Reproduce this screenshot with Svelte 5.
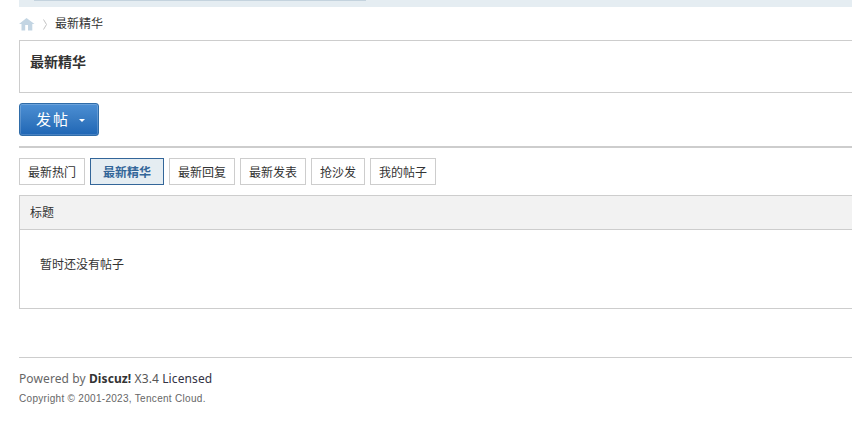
<script>
	const tabs = [
		{ label: '最新热门' },
		{ label: '最新精华', active: true },
		{ label: '最新回复' },
		{ label: '最新发表' },
		{ label: '抢沙发' },
		{ label: '我的帖子' }
	];
</script>

<div class="page">
	<div class="topbar"><div class="topbar-line"></div></div>

	<nav class="crumbs">
		<svg class="home" width="16" height="13" viewBox="0 0 16 13" aria-hidden="true">
			<path d="M7.5 0 L15.5 6 L13.3 6 L13.3 12.5 L9 12.5 L9 7 L6.2 7 L6.2 12.5 L2.5 12.5 L2.5 6 L0 6 Z" fill="#c3d5e3" />
		</svg>
		<svg class="sep" width="4" height="11" viewBox="0 0 4 11" aria-hidden="true">
			<path d="M0.5 0.5 L3.5 5.5 L0.5 10.5" fill="none" stroke="#c4c4c4" />
		</svg>
		<span>最新精华</span>
	</nav>

	<div class="title-box">
		<h1>最新精华</h1>
	</div>

	<div class="actions">
		<button class="post-btn">
			<span>发帖</span>
			<i class="caret"></i>
		</button>
	</div>

	<ul class="tabs">
		{#each tabs as tab}
			<li class:active={tab.active}>{tab.label}</li>
		{/each}
	</ul>

	<div class="list">
		<div class="list-head">标题</div>
		<div class="list-empty">暂时还没有帖子</div>
	</div>

	<footer>
		<p class="powered">Powered by <strong>Discuz!</strong> <em>X3.4</em> <span>Licensed</span></p>
		<p class="copy">Copyright © 2001-2023, Tencent Cloud.</p>
	</footer>
</div>

<style>
	:global(body) {
		margin: 0;
		background: #fff;
		overflow: hidden;
	}

	.page {
		width: 900px;
		margin-left: 19px;
		font: 12px/18px "Liberation Sans", "Noto Sans CJK SC", sans-serif;
		color: #333;
	}

	.topbar {
		height: 7px;
		background: #e5edf2;
		padding-left: 15px;
	}

	.topbar-line {
		width: 332px;
		height: 1px;
		background: #c4d3de;
	}

	.crumbs {
		display: flex;
		align-items: center;
		height: 18px;
		margin-top: 8px;
	}

	.home {
		display: block;
		margin-top: 1px;
	}

	.sep {
		display: block;
		margin: 1px 8px 0 8px;
	}

	.title-box {
		box-sizing: border-box;
		height: 53px;
		margin-top: 7px;
		padding: 11px 10px;
		border: 1px solid #cdcdcd;
	}

	h1 {
		margin: 0;
		font-size: 14px;
		line-height: 20px;
		font-weight: 700;
	}

	.actions {
		margin-top: 10px;
		padding-bottom: 10px;
		border-bottom: 2px solid #cdcdcd;
	}

	.post-btn {
		display: flex;
		align-items: center;
		box-sizing: border-box;
		width: 80px;
		height: 33px;
		padding: 0 0 2px 16px;
		border: 1px solid #2f6ca8;
		border-radius: 3px;
		background: linear-gradient(#4c8fd4, #3a7dc4 45%, #1f66b5);
		box-shadow: inset 0 0 0 1px rgba(255, 255, 255, 0.18);
		color: #fff;
		font: 15px/20px "Noto Sans CJK SC", sans-serif;
		letter-spacing: 2px;
	}

	.caret {
		width: 0;
		height: 0;
		margin: 4px 0 0 9px;
		border: 3px solid transparent;
		border-top-color: #fff;
		border-bottom-width: 0;
	}

	.tabs {
		display: flex;
		gap: 5px;
		margin: 10px 0 0;
		padding: 0;
		list-style: none;
	}

	.tabs li {
		box-sizing: border-box;
		height: 27px;
		padding: 2px 8px 0;
		border: 1px solid #cdcdcd;
		line-height: 25px;
	}

	.tabs li.active {
		padding: 2px 12px 0;
		border-color: #336699;
		background: #e5edf2;
		color: #369;
		font-weight: 700;
	}

	.list {
		margin-top: 10px;
		border: 1px solid #cdcdcd;
	}

	.list-head {
		box-sizing: border-box;
		height: 34px;
		padding-left: 10px;
		border-bottom: 1px solid #cdcdcd;
		background: #f2f2f2;
		line-height: 35px;
	}

	.list-empty {
		height: 78px;
		padding-left: 20px;
		line-height: 70px;
	}

	footer {
		margin-top: 48px;
		padding-top: 11px;
		border-top: 1px solid #cdcdcd;
		color: #666;
	}

	p {
		margin: 0;
	}

	.powered {
		font-family: "Noto Sans", sans-serif;
		font-size: 12px;
		line-height: 20px;
		letter-spacing: 0.1px;
	}

	.powered strong {
		color: #333;
	}

	.powered em {
		font-style: normal;
		color: #555;
	}

	.powered span {
		color: #334;
	}

	.copy {
		font-size: 10px;
		line-height: 20px;
		letter-spacing: 0.3px;
	}
</style>
